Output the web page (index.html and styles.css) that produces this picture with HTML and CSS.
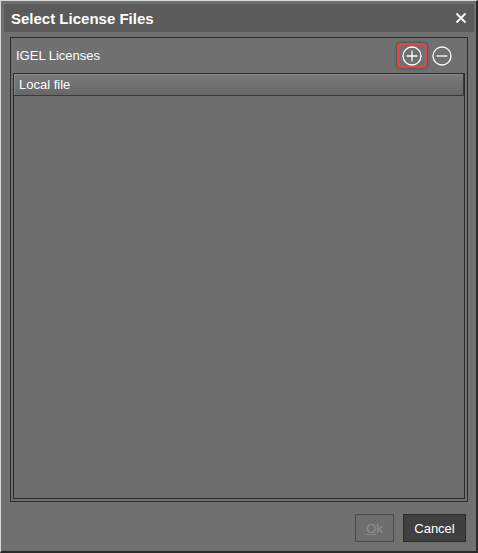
FILE: index.html
```html
<!DOCTYPE html>
<html>
<head>
<meta charset="utf-8">
<link rel="stylesheet" href="styles.css">
</head>
<body>
<div class="dialog">
  <div class="titlebar">
    <span class="title">Select License Files</span>
    <svg class="close" width="12" height="12" viewBox="0 0 12 12"><path d="M1.5 1.5 L10.5 10.5 M10.5 1.5 L1.5 10.5" stroke="#fff" stroke-width="1.9" fill="none"/></svg>
  </div>
  <div class="panel">
    <div class="panel-head">
      <span class="panel-title">IGEL Licenses</span>
      <div class="tools">
        <div class="tool highlight">
          <svg width="22" height="22" viewBox="0 0 22 22"><circle cx="11" cy="11" r="9" stroke="#fff" stroke-width="1.3" fill="none"/><path d="M11 5.5 V16.5 M5.5 11 H16.5" stroke="#fff" stroke-width="1.3"/></svg>
        </div>
        <div class="tool">
          <svg width="22" height="22" viewBox="0 0 22 22"><circle cx="11" cy="11" r="9" stroke="#fff" stroke-width="1.3" fill="none"/><path d="M5.5 11 H16.5" stroke="#fff" stroke-width="1.3"/></svg>
        </div>
      </div>
    </div>
    <div class="list">
      <div class="col-head">Local file</div>
    </div>
  </div>
  <div class="footer">
    <button class="btn disabled"><u>O</u>k</button>
    <button class="btn primary">Cancel</button>
  </div>
</div>
</body>
</html>
```

FILE: styles.css
```css
html, body {
  margin: 0;
  padding: 0;
  background: #2e2e2e;
}
.dialog {
  width: 478px;
  height: 553px;
  box-sizing: border-box;
  background: #707070;
  border-top: 1px solid #d8d8d8;
  border-left: 1px solid #d8d8d8;
  border-right: 2px solid #2a2a2a;
  border-bottom: 2px solid #2a2a2a;
  padding: 3px 2px 3px 3px;
  display: flex;
  flex-direction: column;
  font-family: "Liberation Sans", Arial, sans-serif;
  color: #fff;
}
.titlebar {
  height: 28px;
  background: #5b5b5b;
  display: flex;
  align-items: center;
  justify-content: space-between;
  padding: 0 7px 0 7px;
  flex: none;
}
.title {
  font-weight: bold;
  font-size: 15px;
  margin-top: 1px;
}
.close {
  display: block;
}
.panel {
  flex: 1;
  margin: 5px 6px 0 6px;
  border: 1px solid #2c2c2c;
  display: flex;
  flex-direction: column;
  background: #707070;
}
.panel-head {
  height: 35px;
  display: flex;
  align-items: center;
  justify-content: space-between;
  padding: 0 10px 0 5px;
  flex: none;
}
.panel-title {
  font-size: 13px;
}
.tools {
  display: flex;
  align-items: center;
  gap: 0;
}
.tool {
  width: 26px;
  height: 21px;
  display: flex;
  align-items: center;
  justify-content: center;
  border: 2px solid transparent;
}
.tool.highlight {
  border: 2px solid #e44444;
  border-radius: 4px;
  box-shadow: 0 0 3px rgba(0,0,0,0.55);
}
.tool svg {
  display: block;
}
.list {
  flex: 1;
  margin: 0 2px 2px 2px;
  border: 1px solid #2c2c2c;
  background: #6e6e6e;
}
.col-head {
  height: 21px;
  line-height: 21px;
  font-size: 13px;
  padding-left: 5px;
  background: linear-gradient(#7c7c7c, #666666);
  border-bottom: 1px solid #3a3a3a;
  border-right: 1px solid #3a3a3a;
  box-shadow: inset 1px 1px 0 #8a8a8a;
}
.footer {
  height: 46px;
  flex: none;
  display: flex;
  justify-content: flex-end;
  align-items: flex-start;
  gap: 9px;
  padding: 12px 8px 0 0;
  box-sizing: border-box;
}
.btn {
  height: 28px;
  font-family: "Liberation Sans", Arial, sans-serif;
  font-size: 13px;
  padding: 0;
  box-sizing: border-box;
}
.btn.disabled {
  width: 39px;
  background: #6e6e6e;
  border: 1px solid #4a4a4a;
  color: #8e8e8e;
}
.btn.primary {
  width: 63px;
  background: #404040;
  border: 1px solid #2a2a2a;
  color: #fff;
}
```
